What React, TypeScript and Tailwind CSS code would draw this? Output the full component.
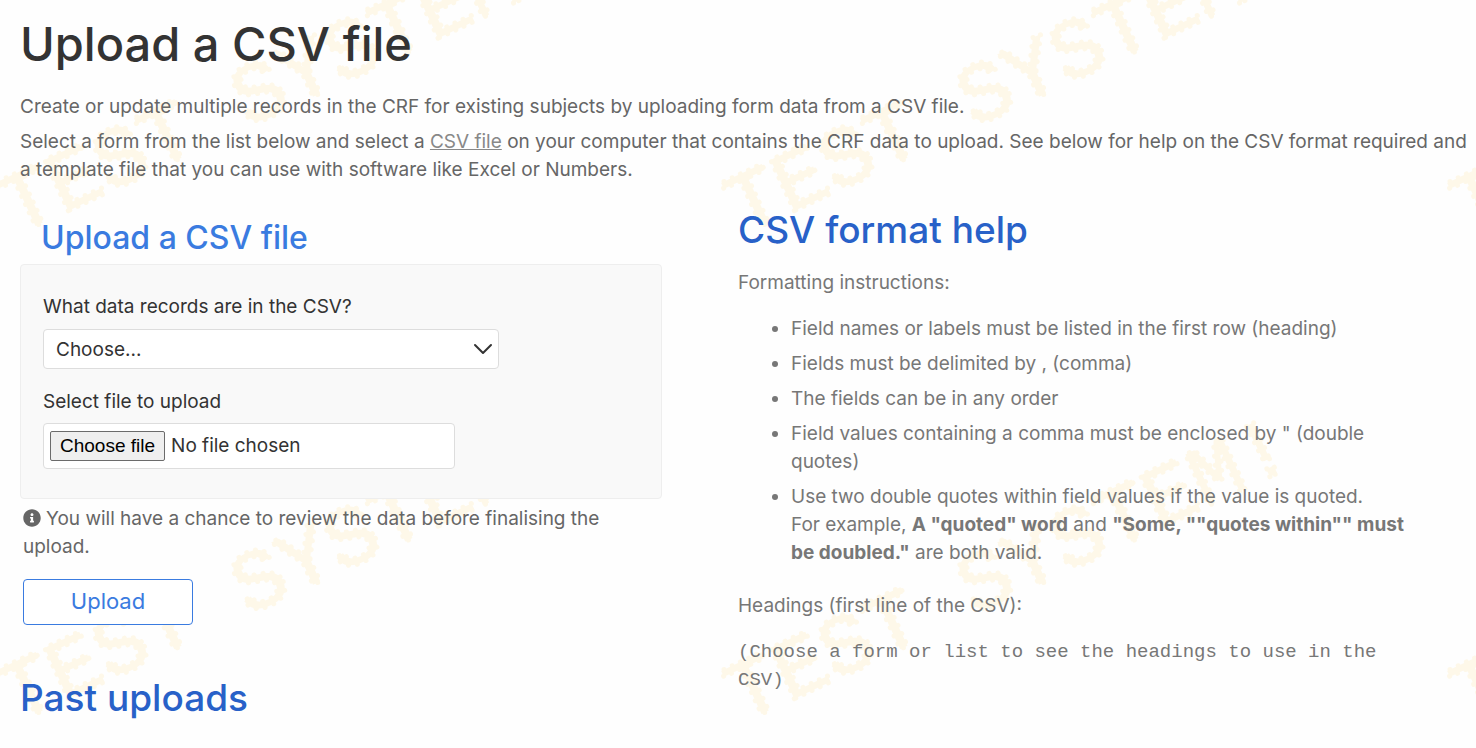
import { useRef, useState } from 'react';
import { FaInfoCircle } from 'react-icons/fa';

const formatRules = [
  'Field names or labels must be listed in the first row (heading)',
  'Fields must be delimited by , (comma)',
  'The fields can be in any order',
  'Field values containing a comma must be enclosed by " (double quotes)',
];

function Watermark() {
  return (
    <svg aria-hidden="true" className="pointer-events-none absolute inset-0 -z-10 h-full w-full">
      <defs>
        <pattern id="watermark" x="-10" y="-240" width="726" height="488" patternUnits="userSpaceOnUse">
          <text
            transform="translate(26 475) rotate(-25)"
            className="fill-[#fef8e9] stroke-[#fef8e9] font-['Liberation_Mono',monospace] text-[85px]"
            strokeWidth="5"
            strokeLinecap="round"
            strokeDasharray="0 9"
          >
            TEST SYSTEM!
          </text>
        </pattern>
      </defs>
      <rect width="100%" height="100%" fill="url(#watermark)" />
    </svg>
  );
}

function UploadForm() {
  const fileInput = useRef<HTMLInputElement>(null);
  const [fileName, setFileName] = useState('No file chosen');

  return (
    <form className="pt-[17px]" onSubmit={(e) => e.preventDefault()}>
      <h3 className="mb-[6px] pl-[21px] text-[32px] leading-10 font-medium text-[#3a7be0]">
        Upload a CSV file
      </h3>

      <div className="rounded border border-[#eee] bg-[#f9f9f9] px-[22px] pt-7 pb-[29px] text-[#333]">
        <label htmlFor="records" className="block">
          What data records are in the CSV?
        </label>
        <div className="relative mt-2 max-w-[456px]">
          <select
            id="records"
            className="block h-10 w-full appearance-none rounded border border-[#ddd] bg-white px-3 pt-0.5 text-[#333]"
          >
            <option>Choose...</option>
          </select>
          <svg
            aria-hidden="true"
            viewBox="0 0 20 12"
            className="pointer-events-none absolute top-[14px] right-[6px] h-3 w-5 fill-none stroke-[#333]"
          >
            <path d="M2 2 L10 10 L18 2" strokeWidth="2" strokeLinecap="round" strokeLinejoin="round" />
          </svg>
        </div>

        <label htmlFor="csv-file" className="mt-[19px] block">
          Select file to upload
        </label>
        <div className="mt-[7px] flex h-[46px] max-w-[412px] items-center gap-[6px] rounded border border-[#ddd] bg-white px-[6px]">
          <input
            ref={fileInput}
            id="csv-file"
            type="file"
            accept=".csv"
            className="sr-only"
            onChange={(e) => setFileName(e.target.files?.[0]?.name ?? 'No file chosen')}
          />
          <button
            type="button"
            onClick={() => fileInput.current?.click()}
            className="h-[30px] rounded-xs border border-[#6b6b6b] bg-[#efefef] px-[9px] font-['Liberation_Sans',sans-serif] leading-7 text-black"
          >
            Choose file
          </button>
          <span>{fileName}</span>
        </div>
      </div>

      <div className="mt-[6px] pr-10 pl-[3px]">
        <p>
          <FaInfoCircle className="mr-[5px] inline-block align-[-2px] text-[18px]" />
          You will have a chance to review the data before finalising the upload.
        </p>
        <button
          type="submit"
          className="mt-[18px] h-[46px] w-[170px] rounded border border-[#3a7be0] bg-white pb-0.5 text-[22px] text-[#3a7be0]"
        >
          Upload
        </button>
      </div>
    </form>
  );
}

function FormatHelp() {
  return (
    <section className="pr-12 text-[#777]">
      <h2 className="pt-[5px] text-[37px] leading-[48px] font-medium text-[#2861c8]">CSV format help</h2>
      <p className="mt-[15px]">Formatting instructions:</p>
      <ul className="mt-[18px] flex list-disc flex-col gap-[7px] pl-[53px]">
        {formatRules.map((rule) => (
          <li key={rule}>{rule}</li>
        ))}
        <li>
          Use two double quotes within field values if the value is quoted.
          <br />
          For example, <strong>A "quoted" word</strong> and{' '}
          <strong>"Some, ""quotes within"" must be doubled."</strong> are both valid.
        </li>
      </ul>
      <p className="mt-[25px]">Headings (first line of the CSV):</p>
      <p className="mt-[18px] font-['Liberation_Mono',monospace]">
        (Choose a form or list to see the headings to use in the CSV)
      </p>
    </section>
  );
}

export default function App() {
  return (
    <main className="relative isolate min-h-screen overflow-hidden bg-[#fefefe] pt-3 pr-1 pl-5 font-['Inter',sans-serif] text-[19px] leading-7 text-[#666]">
      <Watermark />
      <h1 className="text-[47px] leading-16 font-medium text-[#333]">Upload a CSV file</h1>

      <p className="mt-[17px]">
        Create or update multiple records in the CRF for existing subjects by uploading form data
        from a CSV file.
      </p>
      <p className="mt-[7px]">
        Select a form from the list below and select a{' '}
        <a href="#csv" className="text-[#888] underline">
          CSV file
        </a>{' '}
        on your computer that contains the CRF data to upload. See below for help on the CSV format
        required and a template file that you can use with software like Excel or Numbers.
      </p>

      <div className="mt-[17px] mr-4 grid grid-cols-2">
        <div className="pr-[76px]">
          <UploadForm />
          <h2 className="mt-[49px] text-[37px] leading-[48px] font-medium text-[#2861c8]">
            Past uploads
          </h2>
        </div>
        <FormatHelp />
      </div>
    </main>
  );
}
